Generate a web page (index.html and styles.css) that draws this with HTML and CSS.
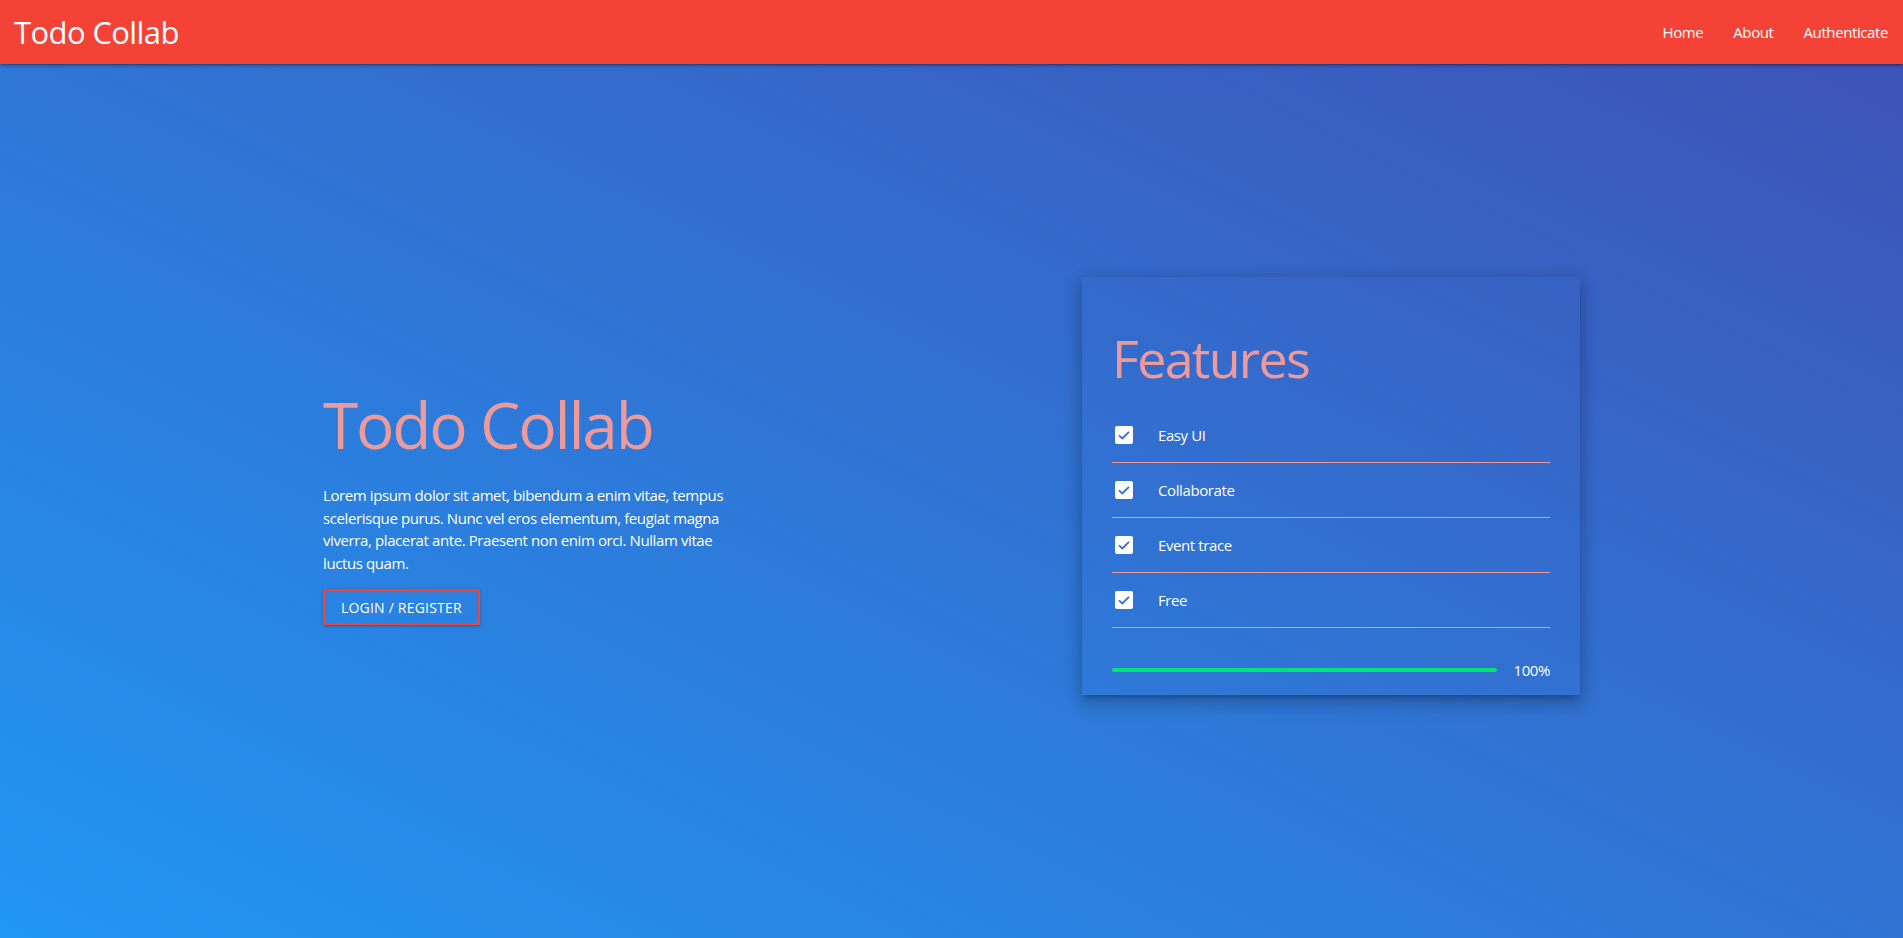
FILE: index.html
```html
<!DOCTYPE html>
<html lang="en">
<head>
<meta charset="utf-8">
<title>Todo Collab</title>
<link rel="stylesheet" href="styles.css">
</head>
<body>
<header class="topbar">
  <a class="brand" href="#">Todo Collab</a>
  <nav class="nav-links">
    <a href="#">Home</a>
    <a href="#">About</a>
    <a href="#">Authenticate</a>
  </nav>
</header>
<main class="hero">
  <section class="intro">
    <h1 class="intro-title">Todo Collab</h1>
    <p class="intro-text">Lorem ipsum dolor sit amet, bibendum a enim vitae, tempus scelerisque purus. Nunc vel eros elementum, feugiat magna viverra, placerat ante. Praesent non enim orci. Nullam vitae luctus quam.</p>
    <a class="btn-outline" href="#">Login / Register</a>
  </section>
  <section class="card">
    <h2 class="card-title">Features</h2>
    <ul class="feature-list">
      <li class="feature">
        <svg class="check" viewBox="0 0 18 18" width="18" height="18"><rect width="18" height="18" rx="2" fill="#fff"/><path d="M4 9.3l3.3 3.2L14 5.9" fill="none" stroke="#3a6bcf" stroke-width="1.8"/></svg>
        <span>Easy UI</span>
      </li>
      <li class="feature">
        <svg class="check" viewBox="0 0 18 18" width="18" height="18"><rect width="18" height="18" rx="2" fill="#fff"/><path d="M4 9.3l3.3 3.2L14 5.9" fill="none" stroke="#3a6bcf" stroke-width="1.8"/></svg>
        <span>Collaborate</span>
      </li>
      <li class="feature">
        <svg class="check" viewBox="0 0 18 18" width="18" height="18"><rect width="18" height="18" rx="2" fill="#fff"/><path d="M4 9.3l3.3 3.2L14 5.9" fill="none" stroke="#3a6bcf" stroke-width="1.8"/></svg>
        <span>Event trace</span>
      </li>
      <li class="feature">
        <svg class="check" viewBox="0 0 18 18" width="18" height="18"><rect width="18" height="18" rx="2" fill="#fff"/><path d="M4 9.3l3.3 3.2L14 5.9" fill="none" stroke="#3a6bcf" stroke-width="1.8"/></svg>
        <span>Free</span>
      </li>
    </ul>
    <div class="progress-row">
      <div class="progress"><div class="progress-fill" style="width:100%"></div></div>
      <span class="progress-label">100%</span>
    </div>
  </section>
</main>
</body>
</html>
```

FILE: styles.css
```css
* {
  box-sizing: border-box;
}

html,
body {
  height: 100%;
}

body {
  margin: 0;
  min-height: 938px;
  display: flex;
  flex-direction: column;
  font-family: "Open Sans", "Noto Sans", sans-serif;
  color: #fff;
  background: linear-gradient(to top right, #2196f3, #3f51b5);
}

.topbar {
  position: relative;
  z-index: 1;
  height: 64px;
  flex: none;
  display: flex;
  align-items: center;
  justify-content: space-between;
  padding-left: 14px;
  background: #f44336;
  box-shadow: 0 2px 2px 0 rgba(0, 0, 0, 0.14), 0 3px 1px -2px rgba(0, 0, 0, 0.12), 0 1px 5px 0 rgba(0, 0, 0, 0.2);
}

.brand {
  color: #fff;
  text-decoration: none;
  font-size: 31px;
  letter-spacing: -0.6px;
}

.nav-links {
  display: flex;
  height: 100%;
}

.nav-links a {
  display: flex;
  align-items: center;
  padding: 0 15px;
  color: #fff;
  text-decoration: none;
  font-size: 15px;
  letter-spacing: -0.4px;
}

.hero {
  flex: 1;
  display: grid;
  grid-template-columns: 420px 498px;
  column-gap: 339px;
  align-items: start;
  padding-left: 323px;
  padding-top: 213px;
}

.intro {
  display: flex;
  flex-direction: column;
  align-items: flex-start;
  padding-top: 112px;
}

.intro-title {
  margin: 0;
  font-size: 64px;
  line-height: 72px;
  font-weight: 400;
  letter-spacing: -2.2px;
  color: #ef9a9a;
}

.intro-text {
  margin: 23px 0 0;
  font-size: 15px;
  line-height: 22.5px;
  letter-spacing: -0.4px;
}

.btn-outline {
  margin-top: 15px;
  height: 36px;
  display: flex;
  align-items: center;
  padding: 0 16px;
  border: 2px solid #f44336;
  border-radius: 2px;
  color: #fff;
  text-decoration: none;
  text-transform: uppercase;
  font-size: 14px;
  letter-spacing: 0.2px;
  box-shadow: 0 2px 2px 0 rgba(0, 0, 0, 0.1), 0 1px 4px 0 rgba(0, 0, 0, 0.14);
}

.card {
  padding: 24px 30px 13px;
  box-shadow: 0 8px 17px 2px rgba(0, 0, 0, 0.14), 0 3px 14px 2px rgba(0, 0, 0, 0.12), 0 5px 5px -3px rgba(0, 0, 0, 0.2);
}

.card-title {
  margin: 28px 0 21px;
  font-size: 52px;
  line-height: 58px;
  font-weight: 400;
  letter-spacing: -1.7px;
  color: #ef9a9a;
}

.feature-list {
  list-style: none;
  margin: 0;
  padding: 0;
}

.feature {
  height: 55px;
  display: flex;
  align-items: center;
  gap: 25px;
  padding-left: 3px;
  border-bottom: 1px solid #ef9a9a;
  font-size: 15px;
  letter-spacing: -0.4px;
}

.check {
  display: block;
  flex: none;
}

.progress-row {
  display: flex;
  align-items: center;
  gap: 16px;
  height: 22.5px;
  margin-top: 31px;
}

.progress {
  flex: 1;
  height: 4px;
  border-radius: 2px;
  overflow: hidden;
  background: rgba(0, 230, 118, 0.3);
}

.progress-fill {
  height: 100%;
  background: #00e676;
}

.progress-label {
  font-size: 15px;
  letter-spacing: -0.4px;
}
```
